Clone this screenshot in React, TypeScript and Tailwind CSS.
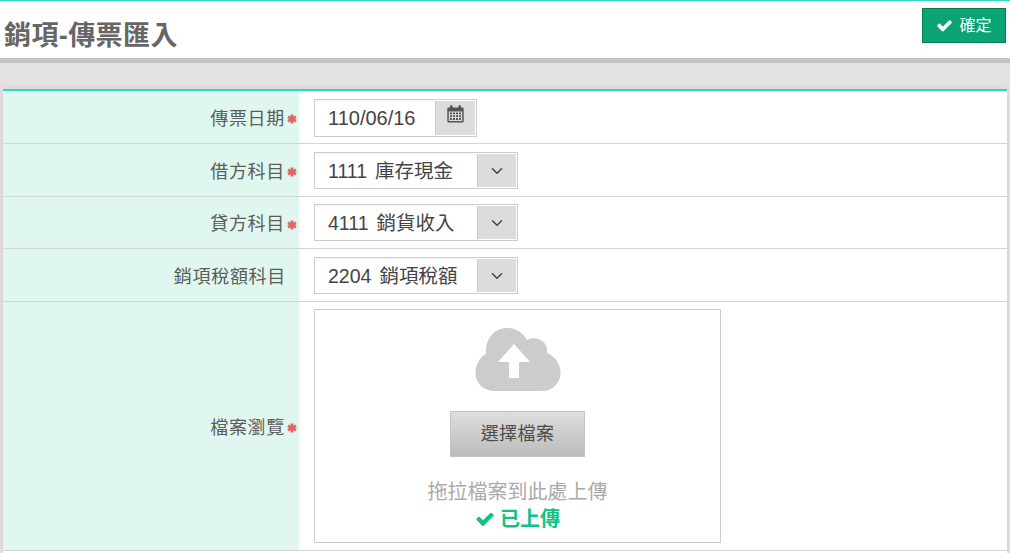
import React from 'react';
import { ChevronDown } from 'lucide-react';

const font = { fontFamily: '"Liberation Sans", "Noto Sans CJK TC", sans-serif' };

const CheckIcon = ({ className }: { className: string }) => (
    <svg viewBox="0 0 1792 1792" className={className} fill="currentColor">
        <path d="M1671 566q0 40-28 68l-724 724-136 136q-28 28-68 28t-68-28l-136-136-362-362q-28-28-28-68t28-68l136-136q28-28 68-28t68 28l294 295 656-657q28-28 68-28t68 28l136 136q28 28 28 68z" />
    </svg>
);

const Star = () => (
    <svg viewBox="0 0 10 10" className="w-[10px] h-[10px] ml-[2px] shrink-0">
        <g stroke="#e06666" strokeWidth="2.8">
            <line x1="5" y1="0.5" x2="5" y2="9.5" />
            <line x1="1" y1="2.7" x2="9" y2="7.3" />
            <line x1="1" y1="7.3" x2="9" y2="2.7" />
        </g>
    </svg>
);

const CalendarIcon = () => (
    <svg viewBox="0 0 17 18" className="w-[17px] h-[18px]">
        <path fill="#555" fillRule="evenodd" d="M1.5 2.5H3V1.2a1 1 0 0 1 1-1h.6a1 1 0 0 1 1 1v1.3h5.8V1.2a1 1 0 0 1 1-1h.6a1 1 0 0 1 1 1v1.3h1.5A1.2 1.2 0 0 1 16.7 3.7v12.6a1.2 1.2 0 0 1-1.2 1.2h-14A1.2 1.2 0 0 1 .3 16.300V3.700A1.200 1.200 0 0 1 1.500 2.500ZM1.800 6.500v9.500h13.400V6.500Z" />
        <path fill="#555" d="M3 7.500h2v1.800H3zM6 7.500h2v1.800H6zM9 7.500h2v1.800H9zM12 7.500h2v1.800h-2zM3 10.300h2v1.800H3zM6 10.300h2v1.800H6zM9 10.300h2v1.800H9zM12 10.300h2v1.800h-2zM3 13.100h2v1.800H3zM6 13.100h2v1.800H6zM9 13.100h2v1.800H9zM12 13.100h2v1.800h-2z" />
    </svg>
);

const Label = ({ text, required = true }: { text: string; required?: boolean }) => (
    <div className="w-[296px] shrink-0 bg-[#dff7ef] flex items-center justify-end pr-[2px] pt-[4px] text-[18px] tracking-[0.7px] text-[#5c5c5c]">
        <span>{text}</span>
        {required ? <Star /> : <span className="w-[11px]" />}
    </div>
);

const SelectBox = ({ code, name }: { code: string; name: string }) => (
    <div className="w-[204px] h-[37px] border border-[#ccc] flex bg-white">
        <div className="flex-1 pl-[13px] pt-[3px] flex items-center text-[#444] shadow-[inset_0_2px_2px_rgba(0,0,0,0.04)]">
            <span className="text-[19.5px] mr-[8px]">{code}</span>
            <span className="text-[19.5px]">{name}</span>
        </div>
        <div className="w-[39px] my-[1px] mr-[1px] bg-[#dcdcdc] border-l border-[#ccc] flex items-center justify-center">
            <ChevronDown className="w-[18px] h-[18px] text-[#444]" strokeWidth={2} />
        </div>
    </div>
);

const Row = ({ children, className }: { children: React.ReactNode; className: string }) => (
    <div className={`flex border-b border-[#d4d4d4] ${className}`}>{children}</div>
);

export default function App() {
    return (
        <div className="w-[1010px] h-[553px] overflow-hidden bg-white" style={font}>
            {/* Header */}
            <div className="h-[63px] border-t border-[#2fd6c5] border-b-[5px] border-b-[#c4c3c3] flex justify-between">
                <h1 className="text-[27px] tracking-[0.4px] font-bold text-[#666] pl-[4px] pt-[17px] leading-[36px]">銷項-傳票匯入</h1>
                <div className="pt-[7px] pr-[4px]">
                    <button className="w-[84px] h-[35px] bg-[#0aa573] border border-[#087a56] flex items-center justify-center gap-[6px] text-white text-[16px]">
                        <CheckIcon className="w-[17px] h-[17px]" />
                        確定
                    </button>
                </div>
            </div>

            {/* Body */}
            <div className="h-[490px] bg-[#e3e2e1] pt-[26px] px-[3px]">
                <div className="h-[464px] bg-white border-t-2 border-[#2fd6c5] shadow-[0_0_6px_rgba(0,0,0,0.1)]">
                    <Row className="h-[53px]">
                        <Label text="傳票日期" />
                        <div className="pl-[15px] pt-[8px]">
                            <div className="w-[163px] h-[38px] border border-[#ccc] flex">
                                <div className="flex-1 pl-[13px] flex items-center text-[20px] text-[#444] shadow-[inset_0_2px_2px_rgba(0,0,0,0.04)]">110/06/16</div>
                                <div className="w-[40px] my-[1px] mr-[1px] bg-[#dcdcdc] border-l border-[#ccc] flex justify-center pt-[4px]">
                                    <CalendarIcon />
                                </div>
                            </div>
                        </div>
                    </Row>
                    <Row className="h-[53px]">
                        <Label text="借方科目" />
                        <div className="pl-[15px] pt-[8px]"><SelectBox code="1111" name="庫存現金" /></div>
                    </Row>
                    <Row className="h-[52px]">
                        <Label text="貸方科目" />
                        <div className="pl-[15px] pt-[7px]"><SelectBox code="4111" name="銷貨收入" /></div>
                    </Row>
                    <Row className="h-[53px]">
                        <Label text="銷項稅額科目" required={false} />
                        <div className="pl-[15px] pt-[8px]"><SelectBox code="2204" name="銷項稅額" /></div>
                    </Row>
                    <Row className="h-[249px]">
                        <Label text="檔案瀏覽" />
                        <div className="pl-[15px] pt-[7px]">
                            <div className="w-[407px] h-[234px] border border-[#ccc] flex flex-col items-center">
                                <svg viewBox="0 0 86 64" className="w-[86px] h-[64px] mt-[18px]">
                                    <path fill="#cccccc" d="M20 63C8 63 .5 55 .5 45 .5 36 5 29 11 26 10 11 19 0 32 0 41 0 48 5 52 12 56 10 60 10 63 11 69 12.500 73 18 72 25 80 28 85.500 36 85.500 45 85.500 55 77 63 68 63Z" />
                                    <path fill="#ffffff" d="M39 16 23 34h11v16h10V34h11Z" />
                                </svg>
                                <button className="mt-[19px] w-[135px] h-[46px] border border-[#c4c4c4] bg-gradient-to-b from-[#dedede] to-[#bcbcbc] text-[18px] text-[#4c4c4c] tracking-[0.4px]">選擇檔案</button>
                                <div className="mt-[22px] text-[20px] leading-[26px] text-[#aaa]">拖拉檔案到此處上傳</div>
                                <div className="flex items-center gap-[5px] text-[20px] leading-[28px] font-bold text-[#10c283]">
                                    <CheckIcon className="w-[20px] h-[20px]" />
                                    已上傳
                                </div>
                            </div>
                        </div>
                    </Row>
                </div>
            </div>
        </div>
    );
}
